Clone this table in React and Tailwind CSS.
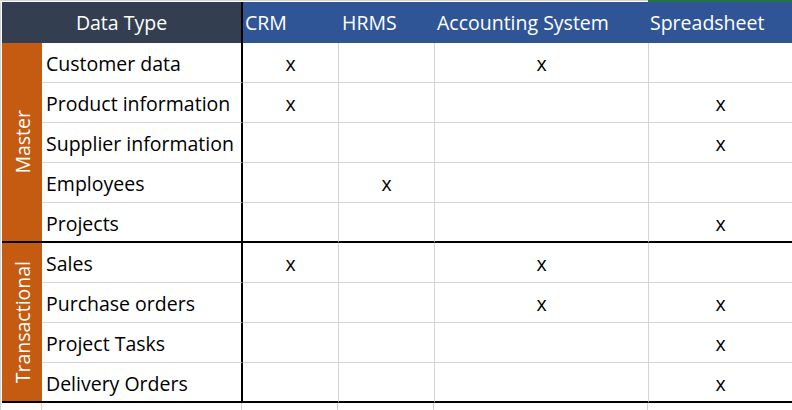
import React from "react";

const master = [
  { name: "Customer data", crm: true, acc: true },
  { name: "Product information", crm: true, sheet: true },
  { name: "Supplier information", sheet: true },
  { name: "Employees", hrms: true },
  { name: "Projects", sheet: true },
];

const transactional = [
  { name: "Sales", crm: true, acc: true },
  { name: "Purchase orders", acc: true, sheet: true },
  { name: "Project Tasks", sheet: true },
  { name: "Delivery Orders", sheet: true },
];

const Row = ({ row, last }) => {
  const line = last ? "border-b-2 border-b-black" : "border-b border-b-[#d4d4d4]";
  return (
    <div className="flex h-[40px]">
      <div className={`w-[201px] shrink-0 flex items-center pl-[4px] pt-[3px] border-r-2 border-r-black ${line}`}>
        {row.name}
      </div>
      <div className={`w-[96px] shrink-0 flex items-center justify-center pt-[3px] border-r border-r-[#d4d4d4] ${line}`}>
        {row.crm ? "x" : ""}
      </div>
      <div className={`w-[96px] shrink-0 flex items-center justify-center pt-[3px] border-r border-r-[#d4d4d4] ${line}`}>
        {row.hrms ? "x" : ""}
      </div>
      <div className={`w-[214px] shrink-0 flex items-center justify-center pt-[3px] border-r border-r-[#d4d4d4] ${line}`}>
        {row.acc ? "x" : ""}
      </div>
      <div className={`flex-1 flex items-center justify-center pt-[3px] ${line}`}>
        {row.sheet ? "x" : ""}
      </div>
    </div>
  );
};

const Block = ({ label, rows }) => (
  <div className="flex">
    <div className="w-[40px] shrink-0 bg-[#c55a11] border-b-2 border-b-black flex items-center justify-center pl-[2px]">
      <span className="[writing-mode:vertical-rl] rotate-180 text-white">{label}</span>
    </div>
    <div className="flex-1 flex flex-col">
      {rows.map((r, i) => (
        <Row key={r.name} row={r} last={i === rows.length - 1} />
      ))}
    </div>
  </div>
);

export default function App() {
  return (
    <div className="w-[792px] h-[410px] bg-white overflow-hidden text-black text-[19.5px] font-['Open_Sans','Noto_Sans',sans-serif] leading-none">
      <div className="flex h-[2px]">
        <div className="flex-1 border-t border-t-[#d4d4d4]" />
        <div className="w-[144px] bg-[#217346]" />
      </div>
      <div className="flex">
        <div className="w-[2px] shrink-0 border-l border-l-[#d4d4d4]" />
        <div className="flex-1 flex flex-col">
          <div className="flex h-[41px] text-white">
            <div className="w-[241px] shrink-0 bg-[#333f50] border-r-2 border-r-black flex items-center justify-center pt-[1px]">
              Data Type
            </div>
            <div className="flex-1 flex bg-[#2f5597]">
              <div className="w-[96px] shrink-0 flex items-center pl-[2px] pt-[1px]">CRM</div>
              <div className="w-[96px] shrink-0 flex items-center pl-[3px] pt-[1px]">HRMS</div>
              <div className="w-[214px] shrink-0 flex items-center pl-[2px] pt-[1px]">Accounting System</div>
              <div className="flex-1 flex items-center pl-[1px] pt-[1px]">Spreadsheet</div>
            </div>
          </div>
          <Block label="Master" rows={master} />
          <Block label="Transactional" rows={transactional} />
          <div className="flex h-[10px]">
            <div className="w-[40px] shrink-0 border-r border-r-[#d4d4d4]" />
            <div className="w-[200px] shrink-0 border-r border-r-[#d4d4d4]" />
            <div className="w-[96px] shrink-0 border-r border-r-[#d4d4d4]" />
            <div className="w-[96px] shrink-0 border-r border-r-[#d4d4d4]" />
            <div className="w-[214px] shrink-0 border-r border-r-[#d4d4d4]" />
            <div className="flex-1" />
          </div>
        </div>
      </div>
    </div>
  );
}
